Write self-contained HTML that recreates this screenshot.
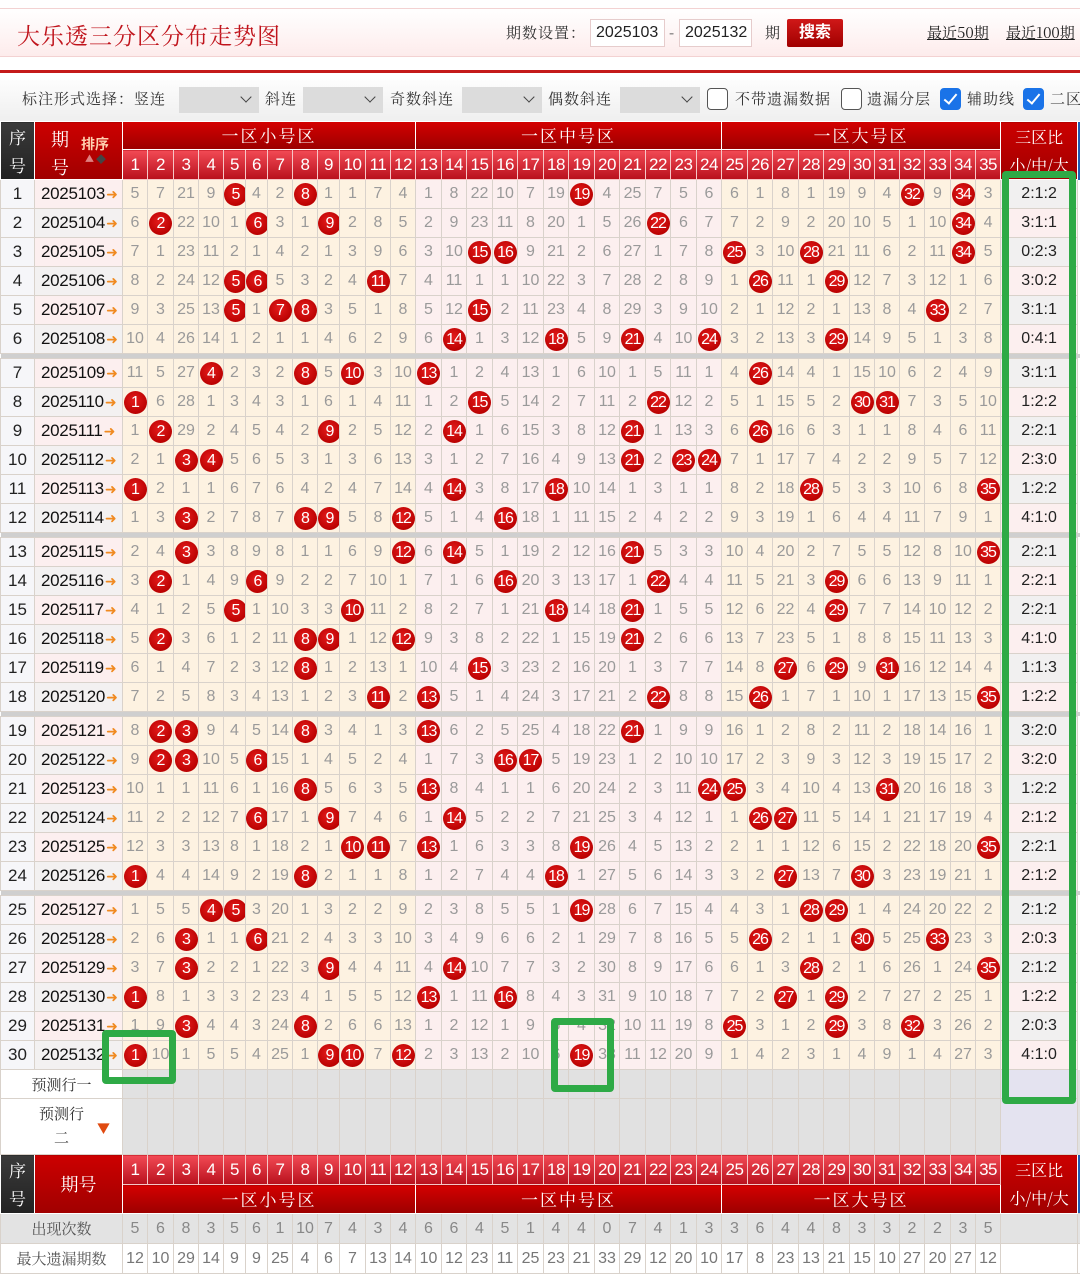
<!DOCTYPE html>
<html><head><meta charset="utf-8">
<style>
*{box-sizing:border-box}
body{margin:0;width:1080px;height:1266px;overflow:hidden;background:#fff;font-family:"Liberation Sans","Noto Sans CJK SC",sans-serif;position:relative}
.a{position:absolute;white-space:nowrap}
.top{left:0;top:8px;width:1080px;height:49px;background:linear-gradient(#fff,#fdecec);border-top:1px solid #f3d2d2;border-bottom:1px solid #f3d2d2}
.title{left:17px;top:18px;font-size:23px;font-family:"Noto Serif CJK SC",serif;color:#c0141c;letter-spacing:1px}
.lb{font-size:15px;color:#333;font-family:"Noto Serif CJK SC",serif;letter-spacing:1px}
.inp{height:28px;background:#fff;border:1px solid #e6cccc;font-size:16px;color:#222;line-height:26px;padding-left:5px}
.btn{left:787px;top:19px;width:56px;height:28px;background:linear-gradient(#d01818,#a00000);color:#fff;font-size:16px;text-align:center;line-height:27px;border-radius:2px;font-weight:bold}
.lnk{font-size:15px;color:#222;text-decoration:underline;font-family:"Noto Serif CJK SC",serif}
.rl{left:0;top:70px;width:1080px;height:3px;background:#c41a1a}
.ctl{left:0;top:74px;width:1080px;height:47px;background:linear-gradient(#fff,#efefef)}
.sel{height:26px;background:#dcdcdc;top:87px}
.sel:after{content:"";position:absolute;right:9px;top:6px;width:7px;height:7px;border-right:1.5px solid #444;border-bottom:1.5px solid #444;transform:rotate(45deg)}
.cb{top:88px;width:21px;height:22px;border:1.5px solid #555;border-radius:4px;background:#fff}
.cb.on{background:#1a73e8;border-color:#1a73e8}
.cb.on:after{content:"";position:absolute;left:6px;top:2px;width:5px;height:11px;border-right:2.5px solid #fff;border-bottom:2.5px solid #fff;transform:rotate(40deg)}
table{position:absolute;left:0;top:121px;border-collapse:collapse;table-layout:fixed;width:1080px}
td{border:1px solid #d9d2cb;text-align:center;padding:0;font-size:16px;color:#9a9a9a;white-space:nowrap;overflow:hidden}
tr.d{height:29px}
tr.sp td{height:5px;background:#cfcfcf;border:0;padding:0}
.z1{background:#fdf2e1}.z2{background:#fcefef}
td.s{background:#f6f6f9;color:#222;font-size:17px}
td.p{background:#fcefef;color:#111;font-size:17px;text-align:left;padding-left:6px;letter-spacing:-.3px}
tr.o td.p{background:#f3f1f1}
td.p i{font-style:normal;color:#f08a20;font-size:14px;margin-left:1px}
td.r{background:#f1f0f0;color:#222;font-size:16px}
tr.o td.r{background:#fcefef}
td.x{background:#fff;border:0}
b{display:inline-block;width:23px;height:23px;border-radius:50%;background:radial-gradient(circle at 45% 40%,#e41c1c,#b80000 75%);color:#fff;font-weight:normal;font-size:16px;line-height:23px;letter-spacing:-1px;vertical-align:middle}
th{font-weight:normal;padding:0;color:#fff;overflow:hidden}
.hg{background:linear-gradient(#d40000,#9c0000);font-size:17px;font-family:"Noto Serif CJK SC",serif;letter-spacing:2px;border:1px solid #fff;border-top:0;line-height:24px}
.hn{background:linear-gradient(#f24a55,#b8101c);font-size:17px;border:1px solid #f6c6c6;letter-spacing:-.5px;line-height:24px}
.hs{background:linear-gradient(#3a3a3a,#222);font-size:17px;font-family:"Noto Serif CJK SC",serif;line-height:28px;border:1px solid #fff}
.hp{background:linear-gradient(#cc0000,#a00000);font-size:18px;font-family:"Noto Serif CJK SC",serif;border:1px solid #fff;position:relative}
.hr{background:linear-gradient(#cc0000,#a00000);font-size:16px;font-family:"Noto Serif CJK SC",serif;line-height:28px;border:1px solid #fff}
.hz{background:#1f5fb4}
tr.pr td{background:#e1e1e1}
tr.pr td.w{background:#fff;color:#333;font-family:"Noto Serif CJK SC",serif;font-size:15px}
tr.pr td.r{background:#e4e3f0}
tr.c1 td{background:#e3e3e3;color:#888}
tr.c1 td.w{color:#555;font-family:"Noto Serif CJK SC",serif;font-size:15px}
tr.c2 td{background:#fff;color:#777}
tr.c2 td.w{color:#555;font-family:"Noto Serif CJK SC",serif;font-size:15px}
.g{position:absolute;border:7px solid #2eaa46;border-radius:4px}
</style></head><body>
<div class="a top"></div>
<div class="a title">大乐透三分区分布走势图</div>
<div class="a lb" style="left:506px;top:22px">期数设置：</div>
<div class="a inp" style="left:590px;top:19px;width:75px">2025103</div>
<div class="a lb" style="left:669px;top:22px">-</div>
<div class="a inp" style="left:679px;top:19px;width:73px">2025132</div>
<div class="a lb" style="left:765px;top:22px">期</div>
<div class="a btn">搜索</div>
<div class="a lnk" style="left:927px;top:22px">最近50期</div>
<div class="a lnk" style="left:1006px;top:22px">最近100期</div>
<div class="a rl"></div>
<div class="a ctl"></div>
<div class="a lb" style="left:22px;top:88px">标注形式选择：竖连</div>
<div class="a sel" style="left:179px;width:80px"></div>
<div class="a lb" style="left:265px;top:88px">斜连</div>
<div class="a sel" style="left:303px;width:80px"></div>
<div class="a lb" style="left:390px;top:88px">奇数斜连</div>
<div class="a sel" style="left:462px;width:80px"></div>
<div class="a lb" style="left:548px;top:88px">偶数斜连</div>
<div class="a sel" style="left:620px;width:80px"></div>
<div class="a cb" style="left:707px"></div>
<div class="a lb" style="left:735px;top:88px">不带遗漏数据</div>
<div class="a cb" style="left:841px"></div>
<div class="a lb" style="left:867px;top:88px">遗漏分层</div>
<div class="a cb on" style="left:940px"></div>
<div class="a lb" style="left:967px;top:88px">辅助线</div>
<div class="a cb on" style="left:1023px"></div>
<div class="a lb" style="left:1050px;top:88px">二区</div>

<table>
<colgroup><col style="width:34px"><col style="width:88px">
<col class="z1" style="width:25px"><col class="z1" style="width:26px"><col class="z1" style="width:25px"><col class="z1" style="width:25px"><col class="z1" style="width:22px"><col class="z1" style="width:22px"><col class="z1" style="width:25px"><col class="z1" style="width:25px"><col class="z1" style="width:22px"><col class="z1" style="width:26px"><col class="z1" style="width:25px"><col class="z1" style="width:25px">
<col class="z2" style="width:26px"><col class="z2" style="width:25px"><col class="z2" style="width:26px"><col class="z2" style="width:25px"><col class="z2" style="width:26px"><col class="z2" style="width:25px"><col class="z2" style="width:26px"><col class="z2" style="width:25px"><col class="z2" style="width:26px"><col class="z2" style="width:25px"><col class="z2" style="width:26px"><col class="z2" style="width:25px">
<col class="z1" style="width:26px"><col class="z1" style="width:25px"><col class="z1" style="width:26px"><col class="z1" style="width:25px"><col class="z1" style="width:26px"><col class="z1" style="width:25px"><col class="z1" style="width:25px"><col class="z1" style="width:25px"><col class="z1" style="width:26px"><col class="z1" style="width:25px"><col class="z1" style="width:25px">
<col style="width:77px"><col style="width:3px"></colgroup>
<tr style="height:28px"><th rowspan="2" class="hs">序<br>号</th><th rowspan="2" class="hp"><span style="position:absolute;left:16px;top:4px">期</span><span style="position:absolute;left:16px;top:32px">号</span><span style="position:absolute;left:46px;top:12px;font-size:14px;color:#ffd0b0;font-weight:bold;font-family:'Noto Sans CJK SC',sans-serif">排序</span><span style="position:absolute;left:50px;top:30px;font-size:9px;color:#e08080">▲</span><span style="position:absolute;left:61px;top:29px;font-size:10px;color:#444">◆</span></th><th colspan="12" class="hg">一区小号区</th><th colspan="12" class="hg">一区中号区</th><th colspan="11" class="hg">一区大号区</th><th rowspan="2" class="hr">三区比<br>小/中/大</th><th rowspan="2" class="hz"></th></tr>
<tr style="height:30px"><th class="hn">1</th><th class="hn">2</th><th class="hn">3</th><th class="hn">4</th><th class="hn">5</th><th class="hn">6</th><th class="hn">7</th><th class="hn">8</th><th class="hn">9</th><th class="hn">10</th><th class="hn">11</th><th class="hn">12</th><th class="hn">13</th><th class="hn">14</th><th class="hn">15</th><th class="hn">16</th><th class="hn">17</th><th class="hn">18</th><th class="hn">19</th><th class="hn">20</th><th class="hn">21</th><th class="hn">22</th><th class="hn">23</th><th class="hn">24</th><th class="hn">25</th><th class="hn">26</th><th class="hn">27</th><th class="hn">28</th><th class="hn">29</th><th class="hn">30</th><th class="hn">31</th><th class="hn">32</th><th class="hn">33</th><th class="hn">34</th><th class="hn">35</th></tr>

<tr class="d"><td class="s">1</td><td class="p">2025103<i>➜</i></td><td>5</td><td>7</td><td>21</td><td>9</td><td><b>5</b></td><td>4</td><td>2</td><td><b>8</b></td><td>1</td><td>1</td><td>7</td><td>4</td><td>1</td><td>8</td><td>22</td><td>10</td><td>7</td><td>19</td><td><b>19</b></td><td>4</td><td>25</td><td>7</td><td>5</td><td>6</td><td>6</td><td>1</td><td>8</td><td>1</td><td>19</td><td>9</td><td>4</td><td><b>32</b></td><td>9</td><td><b>34</b></td><td>3</td><td class="r">2:1:2</td><td class="x"></td></tr>
<tr class="d o"><td class="s">2</td><td class="p">2025104<i>➜</i></td><td>6</td><td><b>2</b></td><td>22</td><td>10</td><td>1</td><td><b>6</b></td><td>3</td><td>1</td><td><b>9</b></td><td>2</td><td>8</td><td>5</td><td>2</td><td>9</td><td>23</td><td>11</td><td>8</td><td>20</td><td>1</td><td>5</td><td>26</td><td><b>22</b></td><td>6</td><td>7</td><td>7</td><td>2</td><td>9</td><td>2</td><td>20</td><td>10</td><td>5</td><td>1</td><td>10</td><td><b>34</b></td><td>4</td><td class="r">3:1:1</td><td class="x"></td></tr>
<tr class="d"><td class="s">3</td><td class="p">2025105<i>➜</i></td><td>7</td><td>1</td><td>23</td><td>11</td><td>2</td><td>1</td><td>4</td><td>2</td><td>1</td><td>3</td><td>9</td><td>6</td><td>3</td><td>10</td><td><b>15</b></td><td><b>16</b></td><td>9</td><td>21</td><td>2</td><td>6</td><td>27</td><td>1</td><td>7</td><td>8</td><td><b>25</b></td><td>3</td><td>10</td><td><b>28</b></td><td>21</td><td>11</td><td>6</td><td>2</td><td>11</td><td><b>34</b></td><td>5</td><td class="r">0:2:3</td><td class="x"></td></tr>
<tr class="d o"><td class="s">4</td><td class="p">2025106<i>➜</i></td><td>8</td><td>2</td><td>24</td><td>12</td><td><b>5</b></td><td><b>6</b></td><td>5</td><td>3</td><td>2</td><td>4</td><td><b>11</b></td><td>7</td><td>4</td><td>11</td><td>1</td><td>1</td><td>10</td><td>22</td><td>3</td><td>7</td><td>28</td><td>2</td><td>8</td><td>9</td><td>1</td><td><b>26</b></td><td>11</td><td>1</td><td><b>29</b></td><td>12</td><td>7</td><td>3</td><td>12</td><td>1</td><td>6</td><td class="r">3:0:2</td><td class="x"></td></tr>
<tr class="d"><td class="s">5</td><td class="p">2025107<i>➜</i></td><td>9</td><td>3</td><td>25</td><td>13</td><td><b>5</b></td><td>1</td><td><b>7</b></td><td><b>8</b></td><td>3</td><td>5</td><td>1</td><td>8</td><td>5</td><td>12</td><td><b>15</b></td><td>2</td><td>11</td><td>23</td><td>4</td><td>8</td><td>29</td><td>3</td><td>9</td><td>10</td><td>2</td><td>1</td><td>12</td><td>2</td><td>1</td><td>13</td><td>8</td><td>4</td><td><b>33</b></td><td>2</td><td>7</td><td class="r">3:1:1</td><td class="x"></td></tr>
<tr class="d o"><td class="s">6</td><td class="p">2025108<i>➜</i></td><td>10</td><td>4</td><td>26</td><td>14</td><td>1</td><td>2</td><td>1</td><td>1</td><td>4</td><td>6</td><td>2</td><td>9</td><td>6</td><td><b>14</b></td><td>1</td><td>3</td><td>12</td><td><b>18</b></td><td>5</td><td>9</td><td><b>21</b></td><td>4</td><td>10</td><td><b>24</b></td><td>3</td><td>2</td><td>13</td><td>3</td><td><b>29</b></td><td>14</td><td>9</td><td>5</td><td>1</td><td>3</td><td>8</td><td class="r">0:4:1</td><td class="x"></td></tr>
<tr class="sp"><td colspan="39"></td></tr>
<tr class="d"><td class="s">7</td><td class="p">2025109<i>➜</i></td><td>11</td><td>5</td><td>27</td><td><b>4</b></td><td>2</td><td>3</td><td>2</td><td><b>8</b></td><td>5</td><td><b>10</b></td><td>3</td><td>10</td><td><b>13</b></td><td>1</td><td>2</td><td>4</td><td>13</td><td>1</td><td>6</td><td>10</td><td>1</td><td>5</td><td>11</td><td>1</td><td>4</td><td><b>26</b></td><td>14</td><td>4</td><td>1</td><td>15</td><td>10</td><td>6</td><td>2</td><td>4</td><td>9</td><td class="r">3:1:1</td><td class="x"></td></tr>
<tr class="d o"><td class="s">8</td><td class="p">2025110<i>➜</i></td><td><b>1</b></td><td>6</td><td>28</td><td>1</td><td>3</td><td>4</td><td>3</td><td>1</td><td>6</td><td>1</td><td>4</td><td>11</td><td>1</td><td>2</td><td><b>15</b></td><td>5</td><td>14</td><td>2</td><td>7</td><td>11</td><td>2</td><td><b>22</b></td><td>12</td><td>2</td><td>5</td><td>1</td><td>15</td><td>5</td><td>2</td><td><b>30</b></td><td><b>31</b></td><td>7</td><td>3</td><td>5</td><td>10</td><td class="r">1:2:2</td><td class="x"></td></tr>
<tr class="d"><td class="s">9</td><td class="p">2025111<i>➜</i></td><td>1</td><td><b>2</b></td><td>29</td><td>2</td><td>4</td><td>5</td><td>4</td><td>2</td><td><b>9</b></td><td>2</td><td>5</td><td>12</td><td>2</td><td><b>14</b></td><td>1</td><td>6</td><td>15</td><td>3</td><td>8</td><td>12</td><td><b>21</b></td><td>1</td><td>13</td><td>3</td><td>6</td><td><b>26</b></td><td>16</td><td>6</td><td>3</td><td>1</td><td>1</td><td>8</td><td>4</td><td>6</td><td>11</td><td class="r">2:2:1</td><td class="x"></td></tr>
<tr class="d o"><td class="s">10</td><td class="p">2025112<i>➜</i></td><td>2</td><td>1</td><td><b>3</b></td><td><b>4</b></td><td>5</td><td>6</td><td>5</td><td>3</td><td>1</td><td>3</td><td>6</td><td>13</td><td>3</td><td>1</td><td>2</td><td>7</td><td>16</td><td>4</td><td>9</td><td>13</td><td><b>21</b></td><td>2</td><td><b>23</b></td><td><b>24</b></td><td>7</td><td>1</td><td>17</td><td>7</td><td>4</td><td>2</td><td>2</td><td>9</td><td>5</td><td>7</td><td>12</td><td class="r">2:3:0</td><td class="x"></td></tr>
<tr class="d"><td class="s">11</td><td class="p">2025113<i>➜</i></td><td><b>1</b></td><td>2</td><td>1</td><td>1</td><td>6</td><td>7</td><td>6</td><td>4</td><td>2</td><td>4</td><td>7</td><td>14</td><td>4</td><td><b>14</b></td><td>3</td><td>8</td><td>17</td><td><b>18</b></td><td>10</td><td>14</td><td>1</td><td>3</td><td>1</td><td>1</td><td>8</td><td>2</td><td>18</td><td><b>28</b></td><td>5</td><td>3</td><td>3</td><td>10</td><td>6</td><td>8</td><td><b>35</b></td><td class="r">1:2:2</td><td class="x"></td></tr>
<tr class="d o"><td class="s">12</td><td class="p">2025114<i>➜</i></td><td>1</td><td>3</td><td><b>3</b></td><td>2</td><td>7</td><td>8</td><td>7</td><td><b>8</b></td><td><b>9</b></td><td>5</td><td>8</td><td><b>12</b></td><td>5</td><td>1</td><td>4</td><td><b>16</b></td><td>18</td><td>1</td><td>11</td><td>15</td><td>2</td><td>4</td><td>2</td><td>2</td><td>9</td><td>3</td><td>19</td><td>1</td><td>6</td><td>4</td><td>4</td><td>11</td><td>7</td><td>9</td><td>1</td><td class="r">4:1:0</td><td class="x"></td></tr>
<tr class="sp"><td colspan="39"></td></tr>
<tr class="d"><td class="s">13</td><td class="p">2025115<i>➜</i></td><td>2</td><td>4</td><td><b>3</b></td><td>3</td><td>8</td><td>9</td><td>8</td><td>1</td><td>1</td><td>6</td><td>9</td><td><b>12</b></td><td>6</td><td><b>14</b></td><td>5</td><td>1</td><td>19</td><td>2</td><td>12</td><td>16</td><td><b>21</b></td><td>5</td><td>3</td><td>3</td><td>10</td><td>4</td><td>20</td><td>2</td><td>7</td><td>5</td><td>5</td><td>12</td><td>8</td><td>10</td><td><b>35</b></td><td class="r">2:2:1</td><td class="x"></td></tr>
<tr class="d o"><td class="s">14</td><td class="p">2025116<i>➜</i></td><td>3</td><td><b>2</b></td><td>1</td><td>4</td><td>9</td><td><b>6</b></td><td>9</td><td>2</td><td>2</td><td>7</td><td>10</td><td>1</td><td>7</td><td>1</td><td>6</td><td><b>16</b></td><td>20</td><td>3</td><td>13</td><td>17</td><td>1</td><td><b>22</b></td><td>4</td><td>4</td><td>11</td><td>5</td><td>21</td><td>3</td><td><b>29</b></td><td>6</td><td>6</td><td>13</td><td>9</td><td>11</td><td>1</td><td class="r">2:2:1</td><td class="x"></td></tr>
<tr class="d"><td class="s">15</td><td class="p">2025117<i>➜</i></td><td>4</td><td>1</td><td>2</td><td>5</td><td><b>5</b></td><td>1</td><td>10</td><td>3</td><td>3</td><td><b>10</b></td><td>11</td><td>2</td><td>8</td><td>2</td><td>7</td><td>1</td><td>21</td><td><b>18</b></td><td>14</td><td>18</td><td><b>21</b></td><td>1</td><td>5</td><td>5</td><td>12</td><td>6</td><td>22</td><td>4</td><td><b>29</b></td><td>7</td><td>7</td><td>14</td><td>10</td><td>12</td><td>2</td><td class="r">2:2:1</td><td class="x"></td></tr>
<tr class="d o"><td class="s">16</td><td class="p">2025118<i>➜</i></td><td>5</td><td><b>2</b></td><td>3</td><td>6</td><td>1</td><td>2</td><td>11</td><td><b>8</b></td><td><b>9</b></td><td>1</td><td>12</td><td><b>12</b></td><td>9</td><td>3</td><td>8</td><td>2</td><td>22</td><td>1</td><td>15</td><td>19</td><td><b>21</b></td><td>2</td><td>6</td><td>6</td><td>13</td><td>7</td><td>23</td><td>5</td><td>1</td><td>8</td><td>8</td><td>15</td><td>11</td><td>13</td><td>3</td><td class="r">4:1:0</td><td class="x"></td></tr>
<tr class="d"><td class="s">17</td><td class="p">2025119<i>➜</i></td><td>6</td><td>1</td><td>4</td><td>7</td><td>2</td><td>3</td><td>12</td><td><b>8</b></td><td>1</td><td>2</td><td>13</td><td>1</td><td>10</td><td>4</td><td><b>15</b></td><td>3</td><td>23</td><td>2</td><td>16</td><td>20</td><td>1</td><td>3</td><td>7</td><td>7</td><td>14</td><td>8</td><td><b>27</b></td><td>6</td><td><b>29</b></td><td>9</td><td><b>31</b></td><td>16</td><td>12</td><td>14</td><td>4</td><td class="r">1:1:3</td><td class="x"></td></tr>
<tr class="d o"><td class="s">18</td><td class="p">2025120<i>➜</i></td><td>7</td><td>2</td><td>5</td><td>8</td><td>3</td><td>4</td><td>13</td><td>1</td><td>2</td><td>3</td><td><b>11</b></td><td>2</td><td><b>13</b></td><td>5</td><td>1</td><td>4</td><td>24</td><td>3</td><td>17</td><td>21</td><td>2</td><td><b>22</b></td><td>8</td><td>8</td><td>15</td><td><b>26</b></td><td>1</td><td>7</td><td>1</td><td>10</td><td>1</td><td>17</td><td>13</td><td>15</td><td><b>35</b></td><td class="r">1:2:2</td><td class="x"></td></tr>
<tr class="sp"><td colspan="39"></td></tr>
<tr class="d"><td class="s">19</td><td class="p">2025121<i>➜</i></td><td>8</td><td><b>2</b></td><td><b>3</b></td><td>9</td><td>4</td><td>5</td><td>14</td><td><b>8</b></td><td>3</td><td>4</td><td>1</td><td>3</td><td><b>13</b></td><td>6</td><td>2</td><td>5</td><td>25</td><td>4</td><td>18</td><td>22</td><td><b>21</b></td><td>1</td><td>9</td><td>9</td><td>16</td><td>1</td><td>2</td><td>8</td><td>2</td><td>11</td><td>2</td><td>18</td><td>14</td><td>16</td><td>1</td><td class="r">3:2:0</td><td class="x"></td></tr>
<tr class="d o"><td class="s">20</td><td class="p">2025122<i>➜</i></td><td>9</td><td><b>2</b></td><td><b>3</b></td><td>10</td><td>5</td><td><b>6</b></td><td>15</td><td>1</td><td>4</td><td>5</td><td>2</td><td>4</td><td>1</td><td>7</td><td>3</td><td><b>16</b></td><td><b>17</b></td><td>5</td><td>19</td><td>23</td><td>1</td><td>2</td><td>10</td><td>10</td><td>17</td><td>2</td><td>3</td><td>9</td><td>3</td><td>12</td><td>3</td><td>19</td><td>15</td><td>17</td><td>2</td><td class="r">3:2:0</td><td class="x"></td></tr>
<tr class="d"><td class="s">21</td><td class="p">2025123<i>➜</i></td><td>10</td><td>1</td><td>1</td><td>11</td><td>6</td><td>1</td><td>16</td><td><b>8</b></td><td>5</td><td>6</td><td>3</td><td>5</td><td><b>13</b></td><td>8</td><td>4</td><td>1</td><td>1</td><td>6</td><td>20</td><td>24</td><td>2</td><td>3</td><td>11</td><td><b>24</b></td><td><b>25</b></td><td>3</td><td>4</td><td>10</td><td>4</td><td>13</td><td><b>31</b></td><td>20</td><td>16</td><td>18</td><td>3</td><td class="r">1:2:2</td><td class="x"></td></tr>
<tr class="d o"><td class="s">22</td><td class="p">2025124<i>➜</i></td><td>11</td><td>2</td><td>2</td><td>12</td><td>7</td><td><b>6</b></td><td>17</td><td>1</td><td><b>9</b></td><td>7</td><td>4</td><td>6</td><td>1</td><td><b>14</b></td><td>5</td><td>2</td><td>2</td><td>7</td><td>21</td><td>25</td><td>3</td><td>4</td><td>12</td><td>1</td><td>1</td><td><b>26</b></td><td><b>27</b></td><td>11</td><td>5</td><td>14</td><td>1</td><td>21</td><td>17</td><td>19</td><td>4</td><td class="r">2:1:2</td><td class="x"></td></tr>
<tr class="d"><td class="s">23</td><td class="p">2025125<i>➜</i></td><td>12</td><td>3</td><td>3</td><td>13</td><td>8</td><td>1</td><td>18</td><td>2</td><td>1</td><td><b>10</b></td><td><b>11</b></td><td>7</td><td><b>13</b></td><td>1</td><td>6</td><td>3</td><td>3</td><td>8</td><td><b>19</b></td><td>26</td><td>4</td><td>5</td><td>13</td><td>2</td><td>2</td><td>1</td><td>1</td><td>12</td><td>6</td><td>15</td><td>2</td><td>22</td><td>18</td><td>20</td><td><b>35</b></td><td class="r">2:2:1</td><td class="x"></td></tr>
<tr class="d o"><td class="s">24</td><td class="p">2025126<i>➜</i></td><td><b>1</b></td><td>4</td><td>4</td><td>14</td><td>9</td><td>2</td><td>19</td><td><b>8</b></td><td>2</td><td>1</td><td>1</td><td>8</td><td>1</td><td>2</td><td>7</td><td>4</td><td>4</td><td><b>18</b></td><td>1</td><td>27</td><td>5</td><td>6</td><td>14</td><td>3</td><td>3</td><td>2</td><td><b>27</b></td><td>13</td><td>7</td><td><b>30</b></td><td>3</td><td>23</td><td>19</td><td>21</td><td>1</td><td class="r">2:1:2</td><td class="x"></td></tr>
<tr class="sp"><td colspan="39"></td></tr>
<tr class="d"><td class="s">25</td><td class="p">2025127<i>➜</i></td><td>1</td><td>5</td><td>5</td><td><b>4</b></td><td><b>5</b></td><td>3</td><td>20</td><td>1</td><td>3</td><td>2</td><td>2</td><td>9</td><td>2</td><td>3</td><td>8</td><td>5</td><td>5</td><td>1</td><td><b>19</b></td><td>28</td><td>6</td><td>7</td><td>15</td><td>4</td><td>4</td><td>3</td><td>1</td><td><b>28</b></td><td><b>29</b></td><td>1</td><td>4</td><td>24</td><td>20</td><td>22</td><td>2</td><td class="r">2:1:2</td><td class="x"></td></tr>
<tr class="d o"><td class="s">26</td><td class="p">2025128<i>➜</i></td><td>2</td><td>6</td><td><b>3</b></td><td>1</td><td>1</td><td><b>6</b></td><td>21</td><td>2</td><td>4</td><td>3</td><td>3</td><td>10</td><td>3</td><td>4</td><td>9</td><td>6</td><td>6</td><td>2</td><td>1</td><td>29</td><td>7</td><td>8</td><td>16</td><td>5</td><td>5</td><td><b>26</b></td><td>2</td><td>1</td><td>1</td><td><b>30</b></td><td>5</td><td>25</td><td><b>33</b></td><td>23</td><td>3</td><td class="r">2:0:3</td><td class="x"></td></tr>
<tr class="d"><td class="s">27</td><td class="p">2025129<i>➜</i></td><td>3</td><td>7</td><td><b>3</b></td><td>2</td><td>2</td><td>1</td><td>22</td><td>3</td><td><b>9</b></td><td>4</td><td>4</td><td>11</td><td>4</td><td><b>14</b></td><td>10</td><td>7</td><td>7</td><td>3</td><td>2</td><td>30</td><td>8</td><td>9</td><td>17</td><td>6</td><td>6</td><td>1</td><td>3</td><td><b>28</b></td><td>2</td><td>1</td><td>6</td><td>26</td><td>1</td><td>24</td><td><b>35</b></td><td class="r">2:1:2</td><td class="x"></td></tr>
<tr class="d o"><td class="s">28</td><td class="p">2025130<i>➜</i></td><td><b>1</b></td><td>8</td><td>1</td><td>3</td><td>3</td><td>2</td><td>23</td><td>4</td><td>1</td><td>5</td><td>5</td><td>12</td><td><b>13</b></td><td>1</td><td>11</td><td><b>16</b></td><td>8</td><td>4</td><td>3</td><td>31</td><td>9</td><td>10</td><td>18</td><td>7</td><td>7</td><td>2</td><td><b>27</b></td><td>1</td><td><b>29</b></td><td>2</td><td>7</td><td>27</td><td>2</td><td>25</td><td>1</td><td class="r">1:2:2</td><td class="x"></td></tr>
<tr class="d"><td class="s">29</td><td class="p">2025131<i>➜</i></td><td>1</td><td>9</td><td><b>3</b></td><td>4</td><td>4</td><td>3</td><td>24</td><td><b>8</b></td><td>2</td><td>6</td><td>6</td><td>13</td><td>1</td><td>2</td><td>12</td><td>1</td><td>9</td><td>5</td><td>4</td><td>32</td><td>10</td><td>11</td><td>19</td><td>8</td><td><b>25</b></td><td>3</td><td>1</td><td>2</td><td><b>29</b></td><td>3</td><td>8</td><td><b>32</b></td><td>3</td><td>26</td><td>2</td><td class="r">2:0:3</td><td class="x"></td></tr>
<tr class="d o"><td class="s">30</td><td class="p">2025132<i>➜</i></td><td><b>1</b></td><td>10</td><td>1</td><td>5</td><td>5</td><td>4</td><td>25</td><td>1</td><td><b>9</b></td><td><b>10</b></td><td>7</td><td><b>12</b></td><td>2</td><td>3</td><td>13</td><td>2</td><td>10</td><td>6</td><td><b>19</b></td><td>33</td><td>11</td><td>12</td><td>20</td><td>9</td><td>1</td><td>4</td><td>2</td><td>3</td><td>1</td><td>4</td><td>9</td><td>1</td><td>4</td><td>27</td><td>3</td><td class="r">4:1:0</td><td class="x"></td></tr>

<tr class="pr" style="height:29px"><td colspan="2" class="w">预测行一</td><td></td><td></td><td></td><td></td><td></td><td></td><td></td><td></td><td></td><td></td><td></td><td></td><td></td><td></td><td></td><td></td><td></td><td></td><td></td><td></td><td></td><td></td><td></td><td></td><td></td><td></td><td></td><td></td><td></td><td></td><td></td><td></td><td></td><td></td><td></td><td class="r"></td><td class="x"></td></tr>
<tr class="pr" style="height:56px"><td colspan="2" class="w" style="position:relative;line-height:24px;padding-bottom:2px">预测行<br>二<span style="position:absolute;right:12px;bottom:14px;color:#e04a10;font-size:13px">▼</span></td><td></td><td></td><td></td><td></td><td></td><td></td><td></td><td></td><td></td><td></td><td></td><td></td><td></td><td></td><td></td><td></td><td></td><td></td><td></td><td></td><td></td><td></td><td></td><td></td><td></td><td></td><td></td><td></td><td></td><td></td><td></td><td></td><td></td><td></td><td></td><td class="r"></td><td class="x"></td></tr>

<tr style="height:30px"><th rowspan="2" class="hs">序<br>号</th><th rowspan="2" class="hp">期号</th><th class="hn">1</th><th class="hn">2</th><th class="hn">3</th><th class="hn">4</th><th class="hn">5</th><th class="hn">6</th><th class="hn">7</th><th class="hn">8</th><th class="hn">9</th><th class="hn">10</th><th class="hn">11</th><th class="hn">12</th><th class="hn">13</th><th class="hn">14</th><th class="hn">15</th><th class="hn">16</th><th class="hn">17</th><th class="hn">18</th><th class="hn">19</th><th class="hn">20</th><th class="hn">21</th><th class="hn">22</th><th class="hn">23</th><th class="hn">24</th><th class="hn">25</th><th class="hn">26</th><th class="hn">27</th><th class="hn">28</th><th class="hn">29</th><th class="hn">30</th><th class="hn">31</th><th class="hn">32</th><th class="hn">33</th><th class="hn">34</th><th class="hn">35</th><th rowspan="2" class="hr">三区比<br>小/中/大</th><th rowspan="2" class="hz"></th></tr>
<tr style="height:29px"><th colspan="12" class="hg">一区小号区</th><th colspan="12" class="hg">一区中号区</th><th colspan="11" class="hg">一区大号区</th></tr>
<tr class="c1" style="height:30px"><td colspan="2" class="w">出现次数</td><td>5</td><td>6</td><td>8</td><td>3</td><td>5</td><td>6</td><td>1</td><td>10</td><td>7</td><td>4</td><td>3</td><td>4</td><td>6</td><td>6</td><td>4</td><td>5</td><td>1</td><td>4</td><td>4</td><td>0</td><td>7</td><td>4</td><td>1</td><td>3</td><td>3</td><td>6</td><td>4</td><td>4</td><td>8</td><td>3</td><td>3</td><td>2</td><td>2</td><td>3</td><td>5</td><td></td><td></td></tr>
<tr class="c2" style="height:30px"><td colspan="2" class="w">最大遗漏期数</td><td>12</td><td>10</td><td>29</td><td>14</td><td>9</td><td>9</td><td>25</td><td>4</td><td>6</td><td>7</td><td>13</td><td>14</td><td>10</td><td>12</td><td>23</td><td>11</td><td>25</td><td>23</td><td>21</td><td>33</td><td>29</td><td>12</td><td>20</td><td>10</td><td>17</td><td>8</td><td>23</td><td>13</td><td>21</td><td>15</td><td>10</td><td>27</td><td>20</td><td>27</td><td>12</td><td></td><td></td></tr>
</table>

<div class="g" style="left:1002px;top:171px;width:74px;height:933px"></div>
<div class="g" style="left:102px;top:1030px;width:74px;height:54px"></div>
<div class="g" style="left:551px;top:1018px;width:63px;height:74px"></div>
</body></html>
